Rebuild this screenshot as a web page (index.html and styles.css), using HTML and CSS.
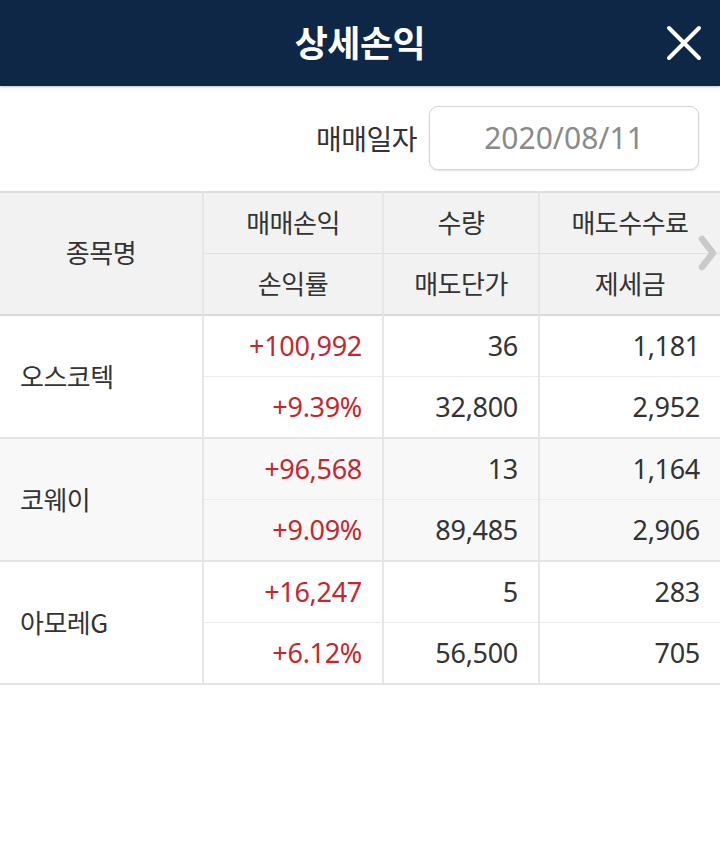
FILE: index.html
```html
<!DOCTYPE html>
<html lang="ko">
<head>
<meta charset="utf-8">
<link rel="stylesheet" href="styles.css">
</head>
<body>
<header class="topbar">
  <div class="spacer"></div>
  <h1 class="title">상세손익</h1>
  <div class="close-wrap">
    <svg class="close" viewBox="0 0 36 36" width="36" height="36"><path d="M3 3 L33 33 M33 3 L3 33" stroke="#fff" stroke-width="4" stroke-linecap="round" fill="none"/></svg>
  </div>
</header>
<div class="date-row">
  <span class="date-label">매매일자</span>
  <div class="date-field">2020/08/11</div>
</div>
<div class="table-wrap">
  <table class="pl">
    <colgroup><col class="c1"><col class="c2"><col class="c3"><col class="c4"></colgroup>
    <thead>
      <tr class="top"><th rowspan="2" class="name-h">종목명</th><th>매매손익</th><th>수량</th><th>매도수수료</th></tr>
      <tr class="bot"><th>손익률</th><th>매도단가</th><th>제세금</th></tr>
    </thead>
    <tbody class="g">
      <tr class="top"><td rowspan="2" class="name">오스코텍</td><td class="red">+100,992</td><td>36</td><td>1,181</td></tr>
      <tr class="bot"><td class="red">+9.39%</td><td>32,800</td><td>2,952</td></tr>
    </tbody>
    <tbody class="g alt">
      <tr class="top"><td rowspan="2" class="name">코웨이</td><td class="red">+96,568</td><td>13</td><td>1,164</td></tr>
      <tr class="bot"><td class="red">+9.09%</td><td>89,485</td><td>2,906</td></tr>
    </tbody>
    <tbody class="g">
      <tr class="top"><td rowspan="2" class="name">아모레G</td><td class="red">+16,247</td><td>5</td><td>283</td></tr>
      <tr class="bot"><td class="red">+6.12%</td><td>56,500</td><td>705</td></tr>
    </tbody>
  </table>
  <svg class="chev" viewBox="0 0 20 36" width="20" height="36"><path d="M4 4 L15 18 L4 32" stroke="#c9c9c9" stroke-width="6.5" stroke-linecap="round" stroke-linejoin="round" fill="none"/></svg>
</div>
</body>
</html>
```
FILE: styles.css
```css
* { box-sizing: border-box; }
html, body { margin: 0; padding: 0; background: #fff; }
body { font-family: "Noto Sans CJK KR", "Noto Sans", sans-serif; color: #333; width: 720px; }

.topbar {
  height: 86px;
  background: #0f2746;
  display: grid;
  grid-template-columns: 1fr auto 1fr;
  align-items: center;
  box-shadow: 0 1px 2px rgba(0,0,0,0.25);
}
.title {
  margin: 0;
  color: #fff;
  font-size: 36px;
  font-weight: 700;
  letter-spacing: -0.5px;
  line-height: 1;
  padding-bottom: 4px;
}
.close-wrap { display: flex; justify-content: flex-end; padding-right: 18px; }
.close { display: block; }

.date-row {
  height: 105px;
  display: flex;
  justify-content: flex-end;
  align-items: center;
  gap: 12px;
  padding-right: 21px;
  padding-bottom: 2px;
}
.date-label { font-size: 28px; color: #333; letter-spacing: -0.5px; }
.date-field {
  width: 270px;
  height: 64px;
  border: 1px solid #d4d4d4;
  border-radius: 9px;
  box-shadow: 0 1px 2px rgba(0,0,0,0.12);
  display: flex;
  align-items: center;
  justify-content: center;
  font-size: 30px;
  color: #8a8a8a;
  font-family: "Noto Sans", sans-serif;
}

.table-wrap { position: relative; }
.pl {
  width: 720px;
  border-collapse: collapse;
  table-layout: fixed;
  border-top: 2px solid #dcdcdc;
}
.c1 { width: 203px; }
.c2 { width: 180px; }
.c3 { width: 156px; }
.c4 { width: 181px; }

.pl th, .pl td {
  height: 61.5px;
  padding: 0 20px 0 20px;
  border-left: 2px solid #e6e6e6;
  font-weight: 400;
  vertical-align: middle;
}
.pl .name-h, .pl .name { border-left: none; }
.pl th {
  background: #f2f2f2;
  font-size: 26px;
  text-align: center;
  padding: 0 4px 4px;
  letter-spacing: -0.5px;
}
.pl thead tr.top th:not(.name-h) { border-bottom: 1px solid #e0e0e0; }
.pl thead { border-bottom: 2px solid #d8d8d8; }
.pl .name-h { padding-bottom: 4px; }

.pl td {
  font-size: 27px;
  text-align: right;
  font-family: "Noto Sans", sans-serif;
  letter-spacing: -0.3px;
  padding-bottom: 2px;
}
.pl td.name {
  text-align: left;
  font-family: "Noto Sans CJK KR", sans-serif;
  font-size: 26px;
  letter-spacing: -0.5px;
}
.pl tbody tr.top td:not(.name) { border-bottom: 1px solid #ebebeb; }
.pl tbody.g { border-bottom: 2px solid #e4e4e4; }
.pl tbody.alt td { background: #f8f8f8; }
.pl td.red { color: #c3282e; }

.chev { position: absolute; right: 2px; top: 44px; }
```
